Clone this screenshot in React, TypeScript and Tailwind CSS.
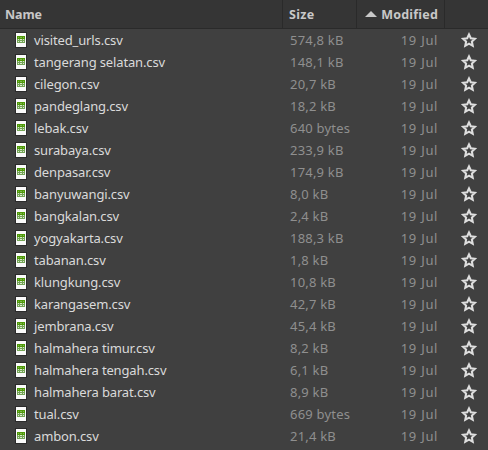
const files: [string, string][] = [
  ["visited_urls.csv", "574,8 kB"],
  ["tangerang selatan.csv", "148,1 kB"],
  ["cilegon.csv", "20,7 kB"],
  ["pandeglang.csv", "18,2 kB"],
  ["lebak.csv", "640 bytes"],
  ["surabaya.csv", "233,9 kB"],
  ["denpasar.csv", "174,9 kB"],
  ["banyuwangi.csv", "8,0 kB"],
  ["bangkalan.csv", "2,4 kB"],
  ["yogyakarta.csv", "188,3 kB"],
  ["tabanan.csv", "1,8 kB"],
  ["klungkung.csv", "10,8 kB"],
  ["karangasem.csv", "42,7 kB"],
  ["jembrana.csv", "45,4 kB"],
  ["halmahera timur.csv", "8,2 kB"],
  ["halmahera tengah.csv", "6,1 kB"],
  ["halmahera barat.csv", "8,9 kB"],
  ["tual.csv", "669 bytes"],
  ["ambon.csv", "21,4 kB"],
];

function SheetIcon() {
  return (
    <svg className="h-4 w-3 shrink-0" viewBox="0 0 12 16" shapeRendering="crispEdges">
      <rect width="12" height="16" fill="#2b2b2b" />
      <rect x="1" y="1" width="10" height="14" fill="#fafafa" />
      <rect x="2" y="4" width="8" height="3" fill="#4e9a06" />
      <rect x="2" y="7" width="8" height="4" fill="#73a455" />
      <path d="M3 5h1v1H3zM5 5h2v1H5zM8 5h1v1H8z" fill="#80b552" />
      <path d="M3 7h1v1H3zM5 7h2v1H5zM8 7h1v1H8zM3 9h1v1H3zM5 9h2v1H5zM8 9h1v1H8z" fill="#dcebd0" />
    </svg>
  );
}

function StarIcon() {
  return (
    <svg className="h-4 w-4 shrink-0" viewBox="0 0 16 16" fill="none" stroke="#dedede" strokeWidth="2.1">
      <path d="M8 2.5 9.8 6.2 13.9 6.7 10.9 9.6 11.7 13.8 8 11.7 4.3 13.8 5.1 9.6 2.1 6.7 6.2 6.2z" />
    </svg>
  );
}

export default function App() {
  return (
    <div className="h-[450px] w-[488px] overflow-hidden bg-[#404040] font-['Noto_Sans','Open_Sans',sans-serif] text-[13px]">
      <div className="flex h-[29px] border-b border-[#2a2a2a] bg-[#353535] text-[12.5px] font-bold leading-[29px] text-[#c8c8c8]">
        <div className="w-[283px] border-r border-[#2a2a2a] pl-[5px] tracking-[-0.1px]">Name</div>
        <div className="w-[74px] border-r border-[#2a2a2a] pl-[6px] tracking-[0.3px]">Size</div>
        <div className="flex w-[88px] items-center justify-end gap-1 border-r border-[#2a2a2a] pr-[6px]">
          <svg className="h-1.5 w-3" viewBox="0 0 12 6" fill="#c8c8c8">
            <path d="M0 6 6 0l6 6z" />
          </svg>
          <span className="tracking-[0.2px]">Modified</span>
        </div>
      </div>
      {files.map(([name, size]) => (
        <div key={name} className="flex h-[22px] items-center whitespace-nowrap leading-[22px] text-[#8f8f8f]">
          <div className="flex w-[290px] items-center gap-[7px] pl-[15px] tracking-[-0.14px] text-[#dadada]">
            <SheetIcon />
            <span>{name}</span>
          </div>
          <span className="w-[74px] tracking-[0.2px]">{size}</span>
          <span className="w-[74px] text-right tracking-[0.6px] [word-spacing:0.5px]">19 Jul</span>
          <div className="pl-[23px]">
            <StarIcon />
          </div>
        </div>
      ))}
    </div>
  );
}
